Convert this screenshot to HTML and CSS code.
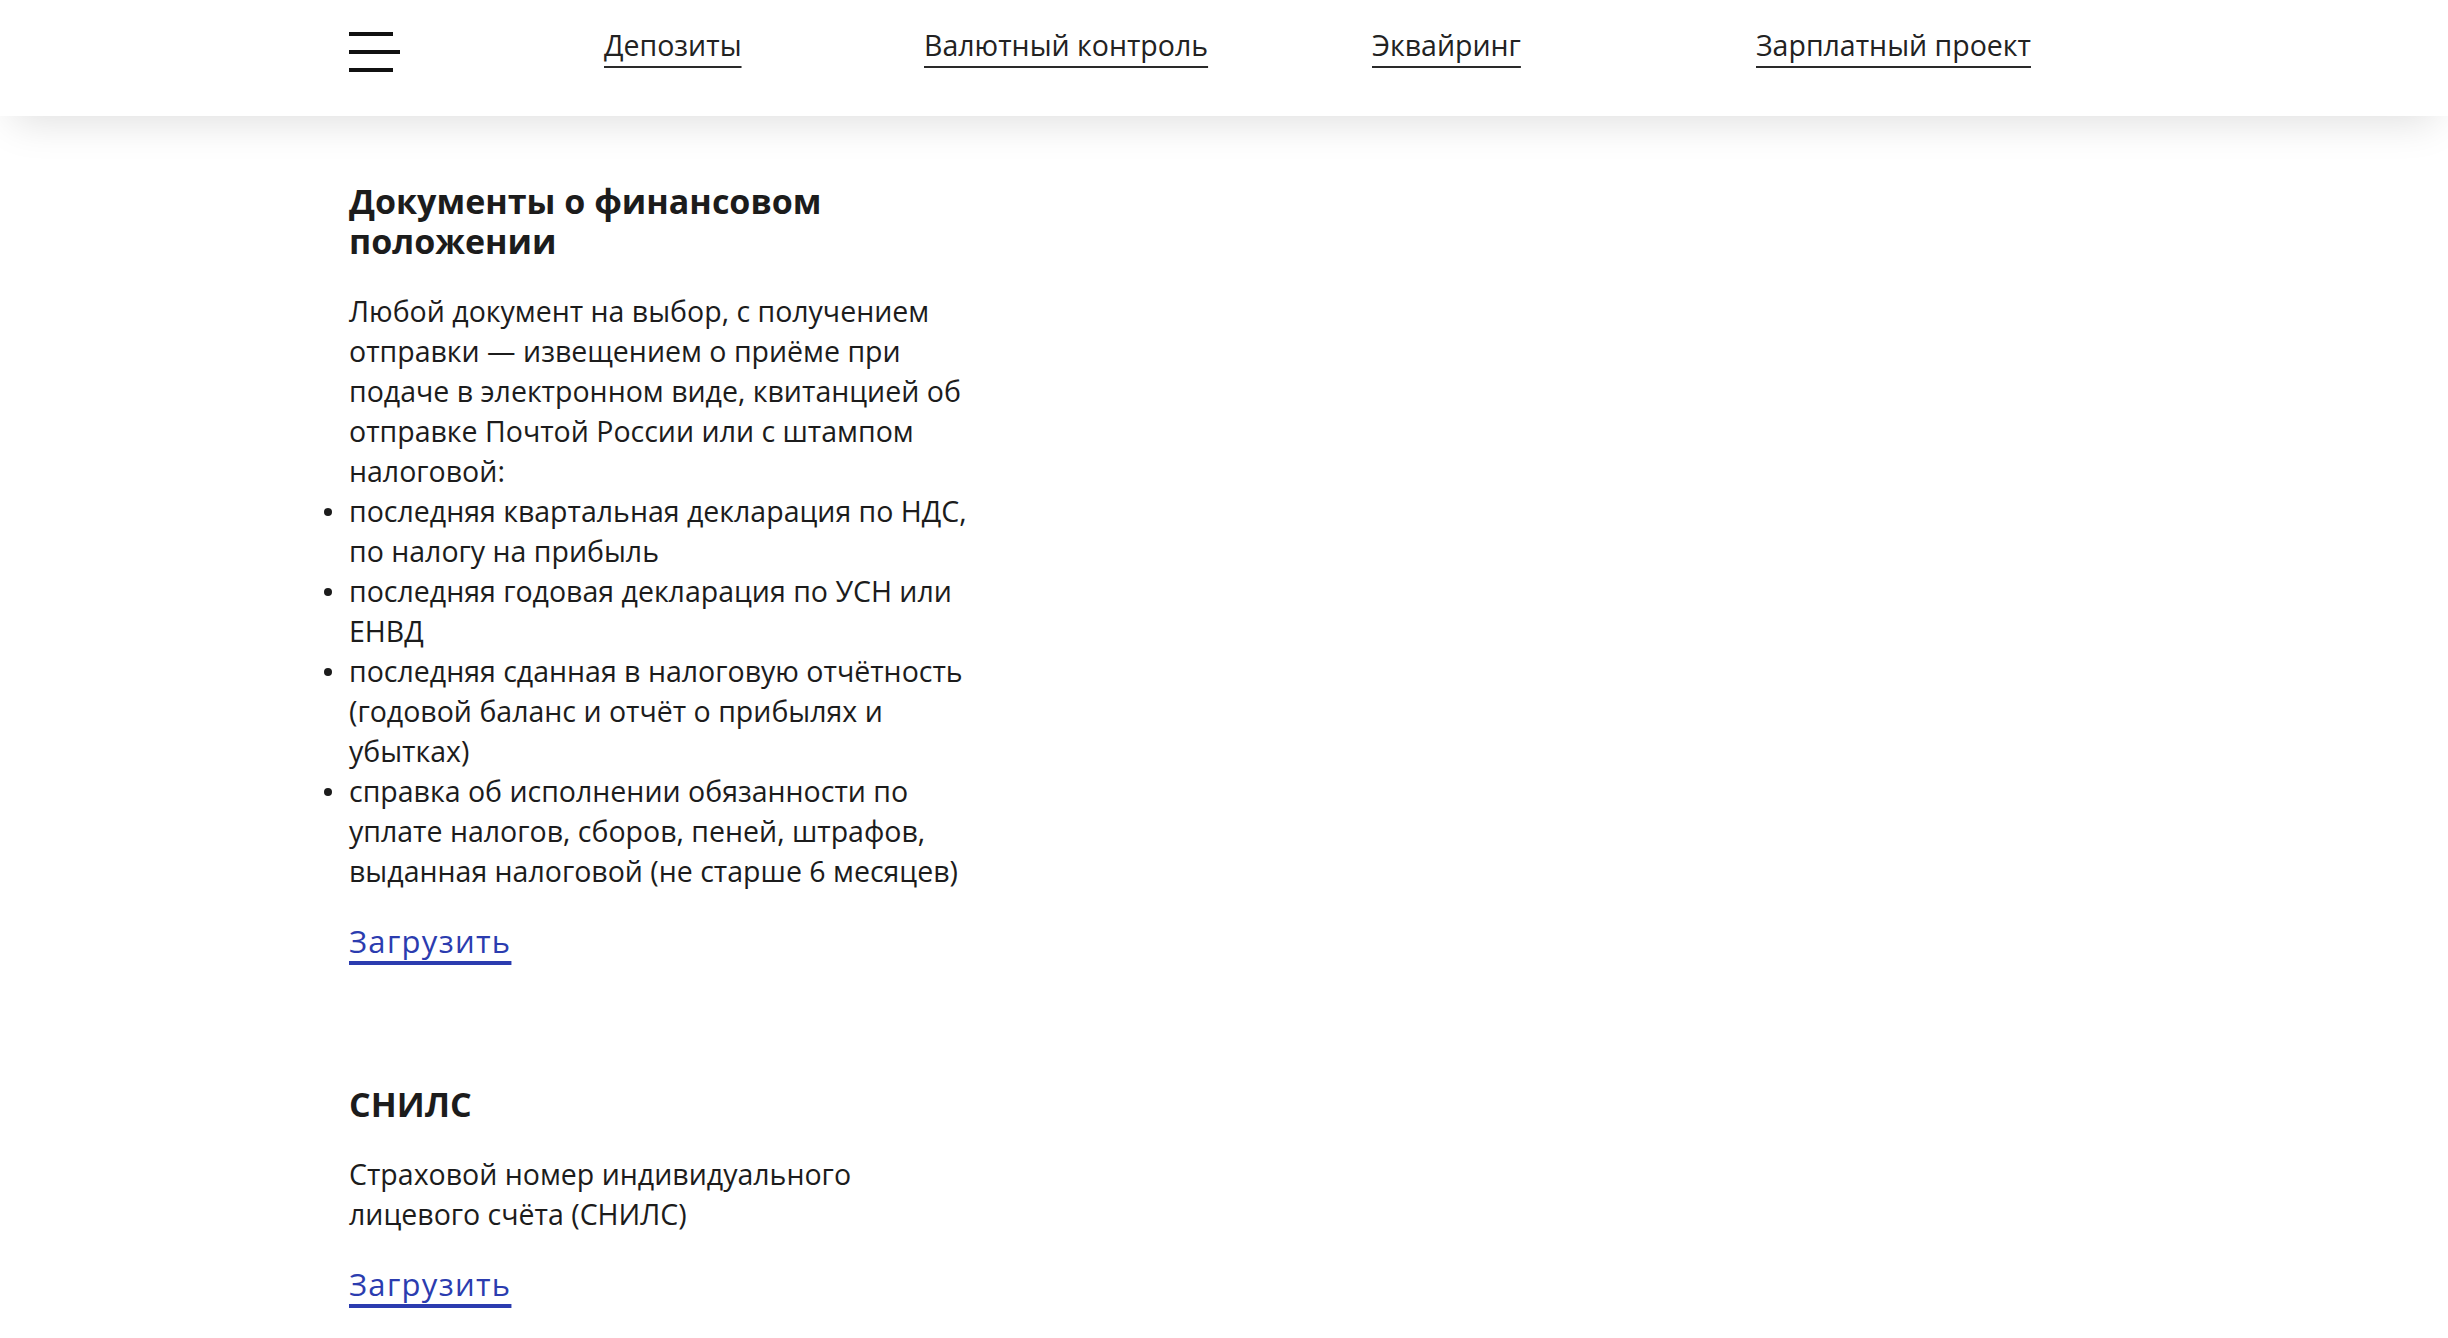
FILE: index.html
```html
<!DOCTYPE html>
<html lang="ru">
<head>
<meta charset="utf-8">
<title>Документы</title>
<link rel="stylesheet" href="styles.css">
</head>
<body>
<header class="topbar">
  <div class="topbar-inner">
    <button class="burger" aria-label="Меню">
      <span class="burger-line short"></span>
      <span class="burger-line"></span>
      <span class="burger-line short"></span>
    </button>
    <a class="nav-link" href="#">Депозиты</a>
    <a class="nav-link" href="#">Валютный контроль</a>
    <a class="nav-link" href="#">Эквайринг</a>
    <a class="nav-link" href="#">Зарплатный проект</a>
  </div>
</header>
<main class="content">
  <section class="doc">
    <h2 class="doc-title">Документы о финансовом положении</h2>
    <p class="doc-text">Любой документ на выбор, с получением отправки — извещением о приёме при подаче в электронном виде, квитанцией об отправке Почтой России или с штампом налоговой:</p>
    <ul class="doc-list">
      <li>последняя квартальная декларация по НДС, по налогу на прибыль</li>
      <li>последняя годовая декларация по УСН или ЕНВД</li>
      <li>последняя сданная в налоговую отчётность (годовой баланс и отчёт о прибылях и убытках)</li>
      <li>справка об исполнении обязанности по уплате налогов, сборов, пеней, штрафов, выданная налоговой (не старше 6 месяцев)</li>
    </ul>
    <a class="upload" href="#">Загрузить</a>
  </section>
  <section class="doc">
    <h2 class="doc-title">СНИЛС</h2>
    <p class="doc-text">Страховой номер индивидуального лицевого счёта (СНИЛС)</p>
    <a class="upload" href="#">Загрузить</a>
  </section>
</main>
</body>
</html>
```
FILE: styles.css
```css
* { box-sizing: border-box; }
html, body { margin: 0; padding: 0; background: #fff; }
body {
  font-family: "Open Sans", "Noto Sans", sans-serif;
  color: #1c1c1c;
  -webkit-font-smoothing: antialiased;
}
.topbar {
  position: relative;
  z-index: 2;
  height: 116px;
  background: #fff;
  box-shadow: 0 18px 40px -12px rgba(0, 0, 0, 0.13);
}
.topbar-inner {
  height: 100%;
  padding-left: 349px;
  display: grid;
  grid-template-columns: 255px 320px 448px 384px auto;
  align-items: center;
  justify-items: start;
}
.burger {
  display: flex;
  flex-direction: column;
  gap: 14px;
  width: 51px;
  padding: 0;
  margin: 0 0 12px 0;
  border: 0;
  background: transparent;
  cursor: pointer;
}
.burger-line {
  display: block;
  height: 4px;
  width: 51px;
  background: #111;
}
.burger-line.short { width: 44px; }
.nav-link {
  font-size: 28.5px;
  line-height: 40px;
  color: #222;
  text-decoration: underline;
  text-decoration-thickness: 2px;
  text-underline-offset: 10px;
  text-decoration-color: #2a2a2a;
  margin-bottom: 26px;
}
.content {
  padding: 65px 0 40px 349px;
}
.doc { width: 630px; }
.doc + .doc { margin-top: 123px; }
.doc-title {
  margin: 0;
  font-size: 34px;
  font-weight: 700;
  line-height: 40px;
  color: #1c1c1c;
}
.doc-text {
  margin: 30px 0 0;
  font-size: 28.5px;
  line-height: 40px;
}
.doc-list {
  margin: 0;
  padding: 0;
  list-style: none;
  font-size: 28.5px;
  line-height: 40px;
}
.doc-list li { position: relative; }
.doc-list li::before {
  content: "";
  position: absolute;
  left: -25px;
  top: 17px;
  width: 8px;
  height: 8px;
  border-radius: 50%;
  background: #1c1c1c;
}
.upload {
  display: inline-block;
  margin-top: 30px;
  font-size: 31px;
  letter-spacing: 1.3px;
  line-height: 40px;
  color: #2b3caf;
  text-decoration: underline;
  text-decoration-thickness: 4px;
  text-underline-offset: 8px;
  text-decoration-color: #2b3caf;
}
```
